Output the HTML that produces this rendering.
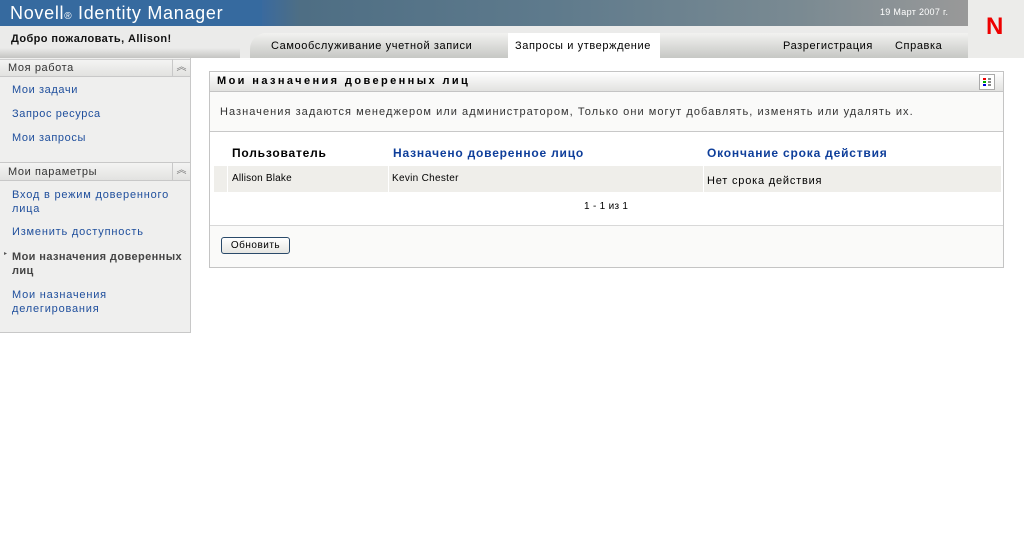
<!DOCTYPE html>
<html><head><meta charset="utf-8"><style>
*{margin:0;padding:0;box-sizing:border-box}
body{width:1024px;height:542px;background:#fff;font-family:"Liberation Sans","DejaVu Sans",sans-serif;font-size:11px;color:#000;position:relative;overflow:hidden;letter-spacing:0.6px}
.abs{position:absolute;white-space:nowrap}
a{color:#1e4e9c;text-decoration:none}
</style></head><body>
<div class="abs" style="left:0;top:0;width:968px;height:26px;background:linear-gradient(90deg,#3a6a9e 0,#3a6a9e 262px,#4e6e84 300px,#5e7a8c 550px,#7a8a92 800px,#999 968px)"></div>
<div class="abs" style="left:0;top:0;width:262px;height:26px;background:#366a9f"></div>
<div class="abs" style="left:10px;top:3px;color:#fff;font-size:18px;letter-spacing:0.7px">Novell<span style="font-size:10px">®</span> Identity Manager</div>
<div class="abs" style="left:880px;top:7px;color:#fff;font-size:9px;letter-spacing:0.3px">19 Март 2007 г.</div>
<div class="abs" style="left:968px;top:0;width:56px;height:58px;background:#ececea"></div>
<div class="abs" style="left:986px;top:13px;color:#e00;font-size:24px;font-weight:bold">N</div>
<div class="abs" style="left:0;top:26px;width:968px;height:32px;background:#ebebea"></div>
<div class="abs" style="left:250px;top:33px;width:718px;height:25px;background:linear-gradient(#f2f2f0,#c6c7c4);border-top-left-radius:16px"></div>
<div class="abs" style="left:0;top:48px;width:240px;height:10px;background:linear-gradient(#ebebea,#c4c4c2)"></div>
<div class="abs" style="left:11px;top:33px;font-weight:bold;font-size:11px;color:#111;letter-spacing:0.4px">Добро пожаловать, Allison!</div>
<div class="abs" style="left:271px;top:40px">Самообслуживание учетной записи</div>
<div class="abs" style="left:508px;top:33px;width:152px;height:25px;background:#fff"></div>
<div class="abs" style="left:515px;top:40px">Запросы и утверждение</div>
<div class="abs" style="left:783px;top:40px">Разрегистрация</div>
<div class="abs" style="left:895px;top:40px">Справка</div>
<!-- sidebar -->
<div class="abs" style="left:0;top:58px;width:191px;height:275px;background:#efefee;border-right:1px solid #c8c8c8;border-bottom:1px solid #c8c8c8"></div>
<div class="abs" style="left:0;top:59px;width:190px;height:18px;background:linear-gradient(#f4f4f3,#e2e2e0);border-bottom:1px solid #c8c8c8;border-top:1px solid #d0d0d0"></div>
<div class="abs" style="left:8px;top:62px;color:#333">Моя работа</div>
<div class="abs" style="left:172px;top:59px;width:18px;height:18px;border-left:1px solid #c8c8c8;text-align:center;color:#777;font-size:10px;line-height:17px;letter-spacing:0">︽</div>
<a class="abs" style="left:12px;top:84px">Мои задачи</a>
<a class="abs" style="left:12px;top:108px">Запрос ресурса</a>
<a class="abs" style="left:12px;top:132px">Мои запросы</a>
<div class="abs" style="left:0;top:162px;width:190px;height:19px;background:linear-gradient(#f4f4f3,#e2e2e0);border-bottom:1px solid #c8c8c8;border-top:1px solid #c8c8c8"></div>
<div class="abs" style="left:8px;top:166px;color:#333">Мои параметры</div>
<div class="abs" style="left:172px;top:162px;width:18px;height:19px;border-left:1px solid #c8c8c8;text-align:center;color:#777;font-size:10px;line-height:18px;letter-spacing:0">︽</div>
<a class="abs" style="left:12px;top:188px;line-height:14px;letter-spacing:0.8px">Вход в режим доверенного<br>лица</a>
<a class="abs" style="left:12px;top:226px;letter-spacing:0.8px">Изменить доступность</a>
<div class="abs" style="left:4px;top:250px;font-size:6px;color:#555">▸</div>
<div class="abs" style="left:12px;top:250px;line-height:14px;font-weight:bold;color:#444;letter-spacing:0.4px">Мои назначения доверенных<br>лиц</div>
<a class="abs" style="left:12px;top:288px;line-height:14px;letter-spacing:0.8px">Мои назначения<br>делегирования</a>
<!-- main panel -->
<div class="abs" style="left:209px;top:71px;width:795px;height:197px;border:1px solid #c4c4c4;background:#fafaf9"></div>
<div class="abs" style="left:210px;top:72px;width:793px;height:20px;background:linear-gradient(#fff,#e2e2e0);border-bottom:1px solid #c4c4c4"></div>
<div class="abs" style="left:217px;top:75px;font-weight:bold;letter-spacing:2.4px;font-size:11px">Мои назначения доверенных лиц</div>
<div class="abs" style="left:979px;top:74px;width:16px;height:16px;border:1px solid #aaa;background:#fff"></div>
<div class="abs" style="left:983px;top:78px;width:3px;height:2px;background:#e00;box-shadow:0 3px #0a0,0 6px #00d,5px 0 #888,5px 3px #888,5px 6px #888"></div>
<div class="abs" style="left:220px;top:106px;color:#333;letter-spacing:1.05px">Назначения задаются менеджером или администратором, Только они могут добавлять, изменять или удалять их.</div>
<div class="abs" style="left:210px;top:131px;width:793px;height:95px;background:#fff;border-top:1px solid #c8c8c8;border-bottom:1px solid #d8d8d8"></div>
<div class="abs" style="left:232px;top:146px;font-weight:bold;font-size:12px;letter-spacing:0.8px">Пользователь</div>
<div class="abs" style="left:393px;top:146px;font-weight:bold;font-size:12px;color:#0e3e9a;letter-spacing:0.8px">Назначено доверенное лицо</div>
<div class="abs" style="left:707px;top:146px;font-weight:bold;font-size:12px;color:#0e3e9a;letter-spacing:0.8px">Окончание срока действия</div>
<div class="abs" style="left:214px;top:166px;width:787px;height:26px;background:#efeeea"></div>
<div class="abs" style="left:227px;top:166px;width:1px;height:26px;background:#fff"></div>
<div class="abs" style="left:388px;top:166px;width:1px;height:26px;background:#fff"></div>
<div class="abs" style="left:703px;top:166px;width:1px;height:26px;background:#fff"></div>
<div class="abs" style="left:232px;top:173px;font-size:10px;letter-spacing:0.2px">Allison Blake</div>
<div class="abs" style="left:392px;top:173px;font-size:10px;letter-spacing:0.3px">Kevin Chester</div>
<div class="abs" style="left:707px;top:175px;font-size:11px;letter-spacing:0.8px">Нет срока действия</div>
<div class="abs" style="left:584px;top:201px;font-size:10px;letter-spacing:0.3px">1 - 1 из 1</div>
<div class="abs" style="left:221px;top:237px;width:69px;height:17px;border:1px solid #2a4a6a;border-radius:3px;background:linear-gradient(#fff,#e6e6e2);font-size:10px;text-align:center;line-height:15px;letter-spacing:0.5px">Обновить</div>
</body></html>
